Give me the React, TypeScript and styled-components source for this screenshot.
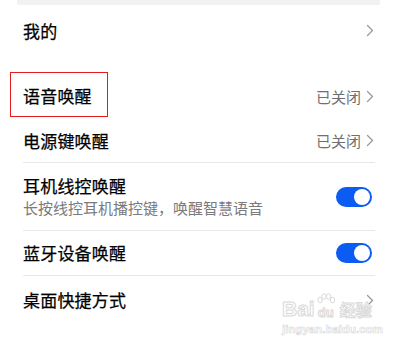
import React from "react";
import styled, { createGlobalStyle } from "styled-components";

const Global = createGlobalStyle`
  html, body { margin: 0; padding: 0; background: #ffffff; }
  body { font-family: "Noto Sans CJK SC", "Noto Sans", sans-serif; width: 400px; height: 350px; overflow: hidden; }
`;

const Page = styled.div`
  position: relative;
  width: 400px;
  height: 350px;
  background: #ffffff;
  display: flex;
  flex-direction: column;
`;

const TopStrip = styled.div`
  height: 5px;
  margin: 0 20px 0 17px;
  background: #f2f2f4;
`;

const Card = styled.div<{ $gap?: number }>`
  margin: ${(p) => p.$gap ?? 0}px 20px 0 17px;
  background: #ffffff;
  border-radius: 12px;
  display: flex;
  flex-direction: column;
`;

const Row = styled.div<{ $h: number; $divider?: boolean }>`
  position: relative;
  height: ${(p) => p.$h}px;
  margin: 0 5px 0 6px;
  display: flex;
  align-items: center;
  justify-content: space-between;
  border-bottom: ${(p) => (p.$divider ? "1px solid #e8e8e8" : "none")};
  box-sizing: border-box;
`;

const TextCol = styled.div`
  display: flex;
  flex-direction: column;
  gap: 1px;
`;

const Title = styled.div`
  font-size: 17px;
  line-height: 22px;
  font-weight: 400;
  color: #000000;
  letter-spacing: 0.2px;
  -webkit-text-stroke: 0.25px #000000;
`;

const Sub = styled.div`
  font-size: 15px;
  line-height: 20px;
  color: #7a7a7a;
`;

const Right = styled.div`
  display: flex;
  align-items: center;
  gap: 5px;
  margin-right: 1px;
`;

const Status = styled.span`
  font-size: 15px;
  color: #6f6f6f;
`;

const Chevron = () => (
  <svg width="8" height="13" viewBox="0 0 8 13">
    <path d="M1.5 1.5 L6.5 6.5 L1.5 11.5" fill="none" stroke="#9a9a9a" strokeWidth="1.3" strokeLinecap="round" strokeLinejoin="round" />
  </svg>
);

const Toggle = styled.div`
  width: 36px;
  height: 20px;
  border-radius: 10px;
  background: #0b5cf2;
  position: relative;
  margin-right: 3px;
  &::after {
    content: "";
    position: absolute;
    right: 2px;
    top: 2px;
    width: 16px;
    height: 16px;
    border-radius: 50%;
    background: #ffffff;
  }
`;

const Highlight = styled.div`
  position: absolute;
  left: -13px;
  top: -1px;
  width: 98px;
  height: 45px;
  border: 1px solid #e61c1c;
  box-sizing: border-box;
  pointer-events: none;
`;

const Watermark = styled.div`
  position: absolute;
  left: 282px;
  top: 293px;
  display: flex;
  flex-direction: column;
  align-items: flex-start;
  color: #ffffff;
  -webkit-text-stroke: 1px #d9d9d9;
  font-family: "Liberation Sans", sans-serif;
  pointer-events: none;
`;

const WmTop = styled.div`
  display: flex;
  align-items: flex-end;
  gap: 1px;
  font-size: 21px;
  font-weight: 700;
  line-height: 20px;
`;

const WmPaw = styled.div`
  display: flex;
  flex-direction: column;
  align-items: center;
  font-size: 13px;
  line-height: 12px;
`;

const WmCn = styled.span`
  font-family: "Noto Sans CJK SC", sans-serif;
  font-size: 16px;
  line-height: 20px;
  margin-left: 3px;
`;

const WmUrl = styled.div`
  font-size: 11.5px;
  font-weight: 700;
  line-height: 14px;
  margin: 3px 0 0 0;
  -webkit-text-stroke: 0.6px #d9d9d9;
`;

const Paw = () => (
  <svg width="20" height="14" viewBox="0 0 20 14">
    <g fill="#fff" stroke="#d9d9d9" strokeWidth="1">
      <ellipse cx="4" cy="7" rx="2.2" ry="2.8" />
      <ellipse cx="8" cy="3.5" rx="2.2" ry="2.8" />
      <ellipse cx="12.5" cy="3.5" rx="2.2" ry="2.8" />
      <ellipse cx="16.5" cy="7" rx="2.2" ry="2.8" />
    </g>
  </svg>
);

export default function App() {
  return (
    <>
      <Global />
      <Page>
        <TopStrip />
        <Card>
          <Row $h={51}>
            <Title>我的</Title>
            <Right>
              <Chevron />
            </Right>
          </Row>
        </Card>
        <Card $gap={17}>
          <Row $h={46}>
            <Title>语音唤醒</Title>
            <Highlight />
            <Right>
              <Status>已关闭</Status>
              <Chevron />
            </Right>
          </Row>
        </Card>
        <Card>
          <Row $h={44} $divider>
            <Title>电源键唤醒</Title>
            <Right>
              <Status>已关闭</Status>
              <Chevron />
            </Right>
          </Row>
          <Row $h={68} $divider>
            <TextCol>
              <Title>耳机线控唤醒</Title>
              <Sub>长按线控耳机播控键，唤醒智慧语音</Sub>
            </TextCol>
            <Toggle />
          </Row>
          <Row $h={45} $divider>
            <Title>蓝牙设备唤醒</Title>
            <Toggle />
          </Row>
          <Row $h={48}>
            <Title>桌面快捷方式</Title>
            <Right>
              <Chevron />
            </Right>
          </Row>
        </Card>
        <Watermark>
          <WmTop>
            <span>Bai</span>
            <WmPaw>
              <Paw />
              <span>du</span>
            </WmPaw>
            <WmCn>经验</WmCn>
          </WmTop>
          <WmUrl>jingyan.baidu.com</WmUrl>
        </Watermark>
      </Page>
    </>
  );
}
